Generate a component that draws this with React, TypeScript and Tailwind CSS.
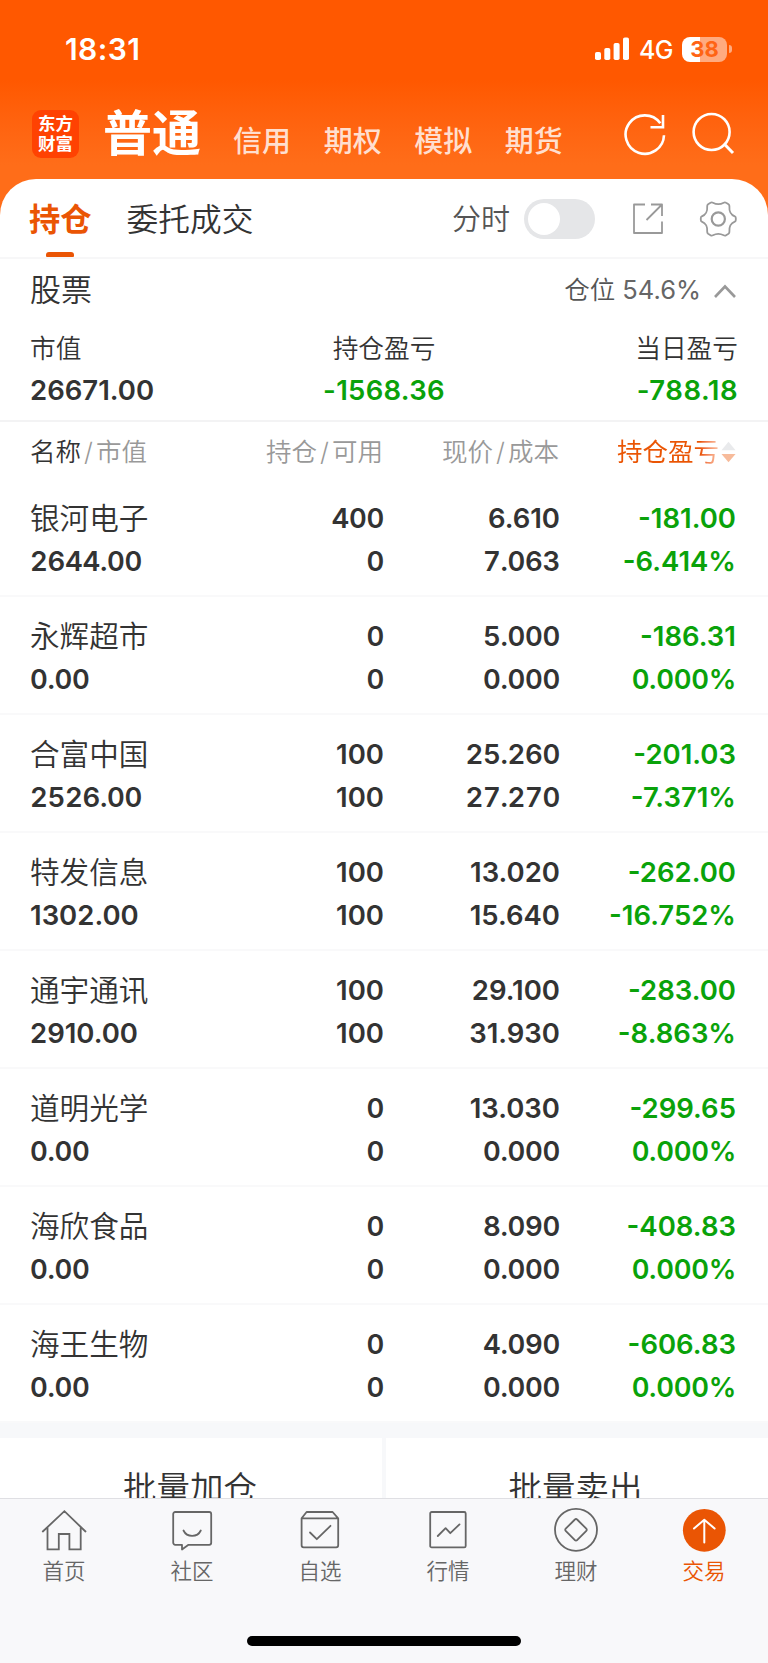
import type { ReactNode } from "react";

const accounts = ["信用", "期权", "模拟", "期货"];

const summary = [
  { label: "市值", value: "26671.00", className: "items-start text-[#333]" },
  { label: "持仓盈亏", value: "-1568.36", className: "items-center text-[#0aa20a] tracking-[0.300px]" },
  { label: "当日盈亏", value: "-788.18", className: "items-end text-[#0aa20a] tracking-[0.500px]" },
];

const holdings = [
  { name: "银河电子", value: "2644.00", amount: "400", usable: "0", price: "6.610", cost: "7.063", profit: "-181.00", rate: "-6.414%" },
  { name: "永辉超市", value: "0.00", amount: "0", usable: "0", price: "5.000", cost: "0.000", profit: "-186.31", rate: "0.000%" },
  { name: "合富中国", value: "2526.00", amount: "100", usable: "100", price: "25.260", cost: "27.270", profit: "-201.03", rate: "-7.371%" },
  { name: "特发信息", value: "1302.00", amount: "100", usable: "100", price: "13.020", cost: "15.640", profit: "-262.00", rate: "-16.752%" },
  { name: "通宇通讯", value: "2910.00", amount: "100", usable: "100", price: "29.100", cost: "31.930", profit: "-283.00", rate: "-8.863%" },
  { name: "道明光学", value: "0.00", amount: "0", usable: "0", price: "13.030", cost: "0.000", profit: "-299.65", rate: "0.000%" },
  { name: "海欣食品", value: "0.00", amount: "0", usable: "0", price: "8.090", cost: "0.000", profit: "-408.83", rate: "0.000%" },
  { name: "海王生物", value: "0.00", amount: "0", usable: "0", price: "4.090", cost: "0.000", profit: "-606.83", rate: "0.000%" },
];

function TabIcon({ children }: { children: ReactNode }) {
  return (
    <svg width="48" height="48" viewBox="0 0 48 48" fill="none" stroke="currentColor" strokeWidth="1.800" strokeLinejoin="round" strokeLinecap="round">
      {children}
    </svg>
  );
}

const tabs = [
  {
    label: "首页",
    icon: (
      <TabIcon>
        <path d="M2.8 25.5 24.4 5.2 45.5 25.5M7.5 22v21.4h11.3V28h10.6v15.4h11.3V22" strokeLinejoin="miter" />
      </TabIcon>
    ),
  },
  {
    label: "社区",
    icon: (
      <TabIcon>
        <path d="M7.2 6h34a2 2 0 0 1 2 2v28.800a2 2 0 0 1-2 2H20.500l-6.500 4.700v-4.700H7.200a2 2 0 0 1-2-2V8a2 2 0 0 1 2-2Z" />
        <path d="M15.500 24.500c3.500 7.200 13.800 7.200 17.300 0" />
      </TabIcon>
    ),
  },
  {
    label: "自选",
    icon: (
      <TabIcon>
        <path d="M5.600 12.300 10.600 6h26l5.600 6.300v27a2 2 0 0 1-2 2H7.600a2 2 0 0 1-2-2ZM5.600 12.300h36.600" />
        <path d="m14 26.500 6.800 6.700L34.500 19.800" />
      </TabIcon>
    ),
  },
  {
    label: "行情",
    icon: (
      <TabIcon>
        <rect x="6.200" y="6" width="35.500" height="35.400" rx="1.500" />
        <path d="m13.800 30 7.800-7.800 4.700 5 9.200-8.800" />
      </TabIcon>
    ),
  },
  {
    label: "理财",
    icon: (
      <TabIcon>
        <circle cx="24" cy="23.800" r="21" />
        <path d="M22.900 13.500a1.500 1.500 0 0 1 2.200 0l9.200 9.200a1.500 1.500 0 0 1 0 2.200l-9.200 9.200a1.500 1.500 0 0 1-2.200 0l-9.200-9.200a1.500 1.500 0 0 1 0-2.200Z" />
      </TabIcon>
    ),
  },
  {
    label: "交易",
    active: true,
    icon: (
      <TabIcon>
        <circle cx="24.300" cy="24.300" r="21.400" fill="currentColor" stroke="none" />
        <path d="M24.300 36.500V13.800M14 22.500l10.300-8.800 10.300 8.800" stroke="white" strokeWidth="2" />
      </TabIcon>
    ),
  },
];

function StatusBar() {
  return (
    <div className="flex h-[98px] items-center justify-between pr-[36px] pl-[65px] text-white">
      <p className="text-[30px] leading-none font-semibold tracking-[0.400px]">18:31</p>
      <div className="flex items-center">
        <svg width="35" height="24" viewBox="0 0 35 24" fill="currentColor">
          <rect x="0" y="15" width="6" height="8" rx="1.800" />
          <rect x="9.300" y="11" width="6" height="12" rx="1.800" />
          <rect x="18.600" y="6" width="6" height="17" rx="1.800" />
          <rect x="28" y="0.500" width="6" height="22.500" rx="1.800" />
        </svg>
        <p className="mt-[2px] ml-[9px] w-[35px] text-[25px] leading-none font-medium tracking-[-0.600px] whitespace-nowrap">4G</p>
        <div className="ml-[8px] flex h-[25px] w-[45px] items-center justify-center rounded-[8px] bg-linear-to-r from-white from-40% to-[#ffab80] to-40%">
          <p className="text-[22px] leading-none font-bold text-[#ff6414]">38</p>
        </div>
        <div className="ml-[2px] h-[8px] w-[3px] rounded-r-full bg-[#ffab80]" />
      </div>
    </div>
  );
}

function Header() {
  return (
    <div className="flex h-[81px] items-start pl-[32px] text-white">
      <div className="mt-[12px] flex h-[48px] w-[47px] shrink-0 flex-col items-center justify-center rounded-[9px] bg-[#ff4202] text-[17.500px] leading-[20px] font-bold">
        <p>东方</p>
        <p>财富</p>
      </div>
      <p className="mt-[6px] ml-[24px] text-[49px] leading-[60px] font-bold whitespace-nowrap">普通</p>
      <div className="mt-[24px] ml-[32px] flex gap-[32.600px] text-[29px] leading-[40px] font-medium text-[#ffdfcf]">
        {accounts.map((account) => (
          <p key={account} className="whitespace-nowrap">{account}</p>
        ))}
      </div>
      <svg className="mt-[12px] ml-auto shrink-0" width="46" height="46" viewBox="0 0 46 46" fill="none" stroke="white" strokeWidth="2.600">
        <path d="M42 25.200A19.200 19.200 0 1 1 38.300 13.200M41 5v12.300H28.500" />
      </svg>
      <svg className="mt-[12px] mr-[32px] ml-[20px] shrink-0" width="48" height="46" viewBox="0 0 48 46" fill="none" stroke="white" strokeWidth="2.600">
        <circle cx="23.600" cy="22" r="18" />
        <path d="m35.800 33.500 9.200 9.500" strokeWidth="3" />
      </svg>
    </div>
  );
}

function PanelTabs() {
  return (
    <div className="flex h-[80px] items-center border-b-2 border-[#f7f7f8] pt-[2px] pl-[29px]">
      <div className="flex flex-col items-center self-stretch">
        <p className="h-[71px] text-[31.300px] leading-[78px] font-bold whitespace-nowrap text-[#ea5504]">持仓</p>
        <div className="h-[5px] w-[28px] rounded-t-[3px] rounded-b-[1px] bg-[#ea5504]" />
      </div>
      <p className="mt-[2px] ml-[35px] text-[31.700px] leading-[76px] font-[350] whitespace-nowrap text-[#333]">委托成交</p>
      <p className="ml-auto pt-[2px] text-[29px] font-[350] whitespace-nowrap text-[#555]">分时</p>
      <div className="ml-[14px] flex h-[40px] w-[71px] shrink-0 items-center rounded-full bg-[#e5e6e8] px-[4px]">
        <div className="h-[32px] w-[32px] rounded-full bg-white" />
      </div>
      <svg className="ml-[36px] shrink-0" width="34" height="34" viewBox="0 0 34 34" fill="none" stroke="#999" strokeWidth="1.800" strokeLinejoin="round">
        <path d="M14 2.500H3V31h28V19.500M20 2.500h11V14M31 2.500 15.500 18" />
      </svg>
      <svg className="mr-[30px] ml-[33px] shrink-0" width="40" height="40" viewBox="0 0 40 40" fill="none" stroke="#999" strokeWidth="1.800" strokeLinejoin="round">
        <path d="M12.500 3.800Q13.700 3 14.900 3.700 20.300 6.700 25.700 3.700 26.900 3 28.100 3.800L30.500 5.300Q31.500 6 31.400 7.200C31 13 32.500 15.500 36.800 17.300Q37.800 17.800 37.800 19V21Q37.800 22.200 36.800 22.700C32.500 24.500 31 27 31.400 32.800Q31.500 34 30.500 34.700L28.100 36.200Q26.900 37 25.700 36.300 20.300 33.300 14.900 36.300 13.700 37 12.500 36.200L10.100 34.700Q9.100 34 9.200 32.800C9.600 27 8.100 24.500 3.800 22.700Q2.800 22.200 2.800 21V19Q2.800 17.800 3.800 17.300C8.100 15.500 9.600 13 9.200 7.200Q9.100 6 10.100 5.300Z" />
        <circle cx="20.300" cy="20" r="6.600" strokeWidth="2.200" />
      </svg>
    </div>
  );
}

function Summary() {
  return (
    <div className="h-[163px] border-b-2 border-[#f3f3f4] px-[30px]">
      <div className="flex h-[63px] items-center justify-between">
        <p className="text-[31px] font-[350] text-[#333]">股票</p>
        <div className="flex items-center text-[#555]">
          <p className="text-[25.500px] font-[350] whitespace-nowrap">仓位 <span className="font-normal text-[#666]">54.6%</span></p>
          <svg className="mr-[1px] ml-[12px]" width="24" height="16" viewBox="0 0 24 16" fill="none" stroke="#999" strokeWidth="2.600">
            <path d="M2 14 12 3.500 22 14" />
          </svg>
        </div>
      </div>
      <div className="grid grid-cols-3">
        {summary.map((item) => (
          <div key={item.label} className={`flex flex-col ${item.className}`}>
            <p className="text-[25.700px] leading-[53px] font-[350] tracking-normal text-[#333]">{item.label}</p>
            <p className="text-[27.500px] leading-[31px] font-semibold">{item.value}</p>
          </div>
        ))}
      </div>
    </div>
  );
}

// Even digit widths, except where a minus or a "1" would leave a gap
function Figure({ value, className = "" }: { value: string; className?: string }) {
  const spacing = /[-1]/.test(value) ? "" : "tabular-nums tracking-[-0.300px]";
  return <p className={`${spacing} ${className}`}>{value}</p>;
}

function Holdings() {
  return (
    <div>
      <div className="grid h-[57px] grid-cols-[161px_192px_176px_177px] items-center pt-[3px] pl-[30px] text-right text-[25.500px] leading-none font-[350] whitespace-nowrap text-[#999]">
        <p className="text-left"><span className="text-[#333]">名称</span><span className="mx-[3px]">/</span>市值</p>
        <p>持仓<span className="mx-[3px]">/</span>可用</p>
        <p>现价<span className="mx-[3px]">/</span>成本</p>
        <div className="flex items-center justify-end">
          <p className="bg-linear-to-r from-[#ea5504] from-82% to-[#f9c5a8] bg-clip-text leading-[34px] font-normal text-transparent">持仓盈亏</p>
          <svg className="ml-[2px]" width="15" height="22" viewBox="0 0 16 22">
            <path d="m8 0 7.500 9H.5Z" fill="#e9eaec" />
            <path d="m8 22 7.500-9H.5Z" fill="#f7bb9b" />
          </svg>
        </div>
      </div>
      {holdings.map((stock) => (
        <div
          key={stock.name}
          className="grid h-[118px] grid-cols-[161px_193px_176px_176px] grid-rows-[42px_43px] border-b-2 border-[#f9f9fa] pt-[18px] pl-[30px] text-right text-[27.500px] leading-[43px] font-semibold whitespace-nowrap text-[#333]"
        >
          <p className="text-left text-[29.600px] leading-[42px] font-[350]">{stock.name}</p>
          <Figure value={stock.amount} />
          <Figure value={stock.price} />
          <Figure value={stock.profit} className="text-[#0aa20a]" />
          <Figure value={stock.value} className="pt-px text-left" />
          <Figure value={stock.usable} className="pt-px" />
          <Figure value={stock.cost} className="pt-px" />
          <Figure value={stock.rate} className="pt-px text-[#0aa20a]" />
        </div>
      ))}
    </div>
  );
}

export default function App() {
  return (
    <div className="flex h-[1663px] w-[768px] flex-col overflow-hidden bg-linear-to-b from-[#ff5800] from-[80px] to-[#ff6d19] to-[165px] font-['Inter','Noto_Sans_CJK_SC',sans-serif]">
      <StatusBar />
      <Header />
      <div className="h-[1319px] shrink-0 overflow-hidden rounded-t-[36px] bg-white">
        <PanelTabs />
        <Summary />
        <Holdings />
        <div className="grid grid-cols-2 gap-[4px] border-t-[15px] border-[#f7f8fa] bg-[#f7f8fa] text-center text-[33.500px] leading-[100px] font-[350] text-[#333]">
          <p className="bg-white pr-[2px]">批量加仓</p>
          <p className="bg-white pr-[3px]">批量卖出</p>
        </div>
      </div>

      {/* Bottom navigation */}
      <div className="flex flex-1 flex-col items-center bg-[#f8f8fa]">
        <div className="grid w-full grid-cols-6 border-t border-[#dfdfe3] pt-[7px]">
          {tabs.map((tab) => (
            <div key={tab.label} className={tab.active ? "flex flex-col items-center text-[#ea5504]" : "flex flex-col items-center text-[#666]"}>
              {tab.icon}
              <p className="text-[21.500px] leading-[34px] font-[350]">{tab.label}</p>
            </div>
          ))}
        </div>
        <div className="mt-auto mb-[17px] h-[10px] w-[274px] rounded-full bg-black" />
      </div>
    </div>
  );
}
